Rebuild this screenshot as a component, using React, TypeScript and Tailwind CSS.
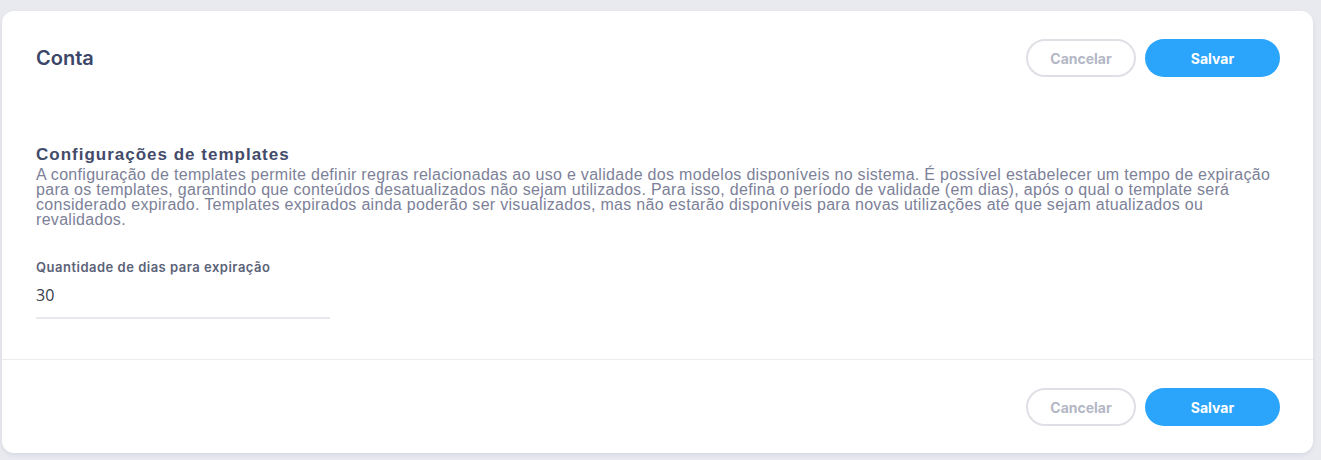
const inter = { fontFamily: "Inter, 'Noto Sans', sans-serif" };

function Actions() {
  return (
    <div className="flex items-center gap-[9px] [font-family:Inter,'Noto_Sans',sans-serif]">
      <button className="h-[38px] w-[110px] rounded-full border-2 border-[#dfe0e6] bg-white text-[14px] font-bold text-[#b4b7c5]">
        Cancelar
      </button>
      <button className="h-[38px] w-[135px] rounded-full bg-[#2ba4fb] text-[14px] font-bold text-white">
        Salvar
      </button>
    </div>
  );
}

export default function App() {
  return (
    <div className="min-h-[460px] w-full bg-[#e9eaf0] pt-[11px] pl-[2px]">
      <div className="w-[1311px] rounded-[12px] bg-white shadow-[0_2px_4px_rgba(30,40,70,0.08)]">
        <div className="flex items-center justify-between pl-[34px] pr-[33px] pt-[28px]">
          <h1 className="text-[20px] font-semibold text-[#3b4668]" style={inter}>
            Conta
          </h1>
          <Actions />
        </div>

        <div className="pl-[34px] pr-[34px] pt-[68px]">
          <h2 className="text-[17px] font-bold leading-[20px] tracking-[1px] text-[#434b6b] [font-family:'Liberation_Sans',Arial,sans-serif]">
            Configurações de templates
          </h2>
          <p className="mt-[2px] text-[16px] leading-[15px] tracking-[0.3px] text-[#7c8198] [font-family:'Liberation_Sans',Arial,sans-serif]">
            A configuração de templates permite definir regras relacionadas ao uso e validade dos modelos disponíveis no
            sistema. É possível estabelecer um tempo de expiração para os templates, garantindo que conteúdos
            desatualizados não sejam utilizados. Para isso, defina o período de validade (em dias), após o qual o template
            será considerado expirado. Templates expirados ainda poderão ser visualizados, mas não estarão disponíveis para
            novas utilizações até que sejam atualizados ou revalidados.
          </p>

          <div className="mt-[32px] w-[294px]">
            <label className="block text-[13px] font-semibold leading-[16px] tracking-[0.5px] text-[#5b6278]" style={inter}>
              Quantidade de dias para expiração
            </label>
            <div className="mt-[8px] border-b-2 border-[#e8e9ef] pb-[10px] text-[16px] leading-[24px] text-[#3a3d4d] [font-family:'Open_Sans',sans-serif]">
              30
            </div>
          </div>
        </div>

        <div className="mt-[40px] border-t border-[#ececf0]" />

        <div className="flex justify-end pr-[33px] pt-[28px] pb-[27px]">
          <Actions />
        </div>
      </div>
    </div>
  );
}
